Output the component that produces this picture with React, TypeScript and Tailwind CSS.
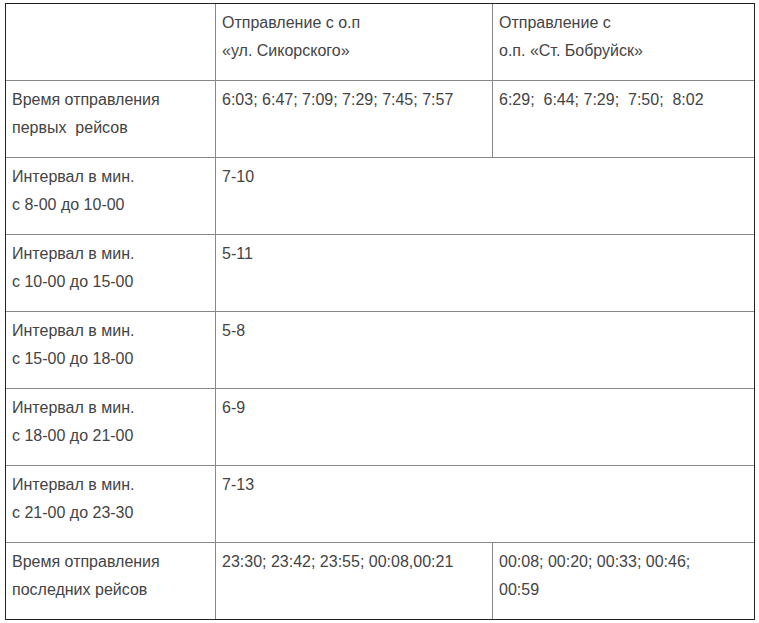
export default function App() {
  const intervals = [
    { label: "с 8-00 до 10-00", value: "7-10" },
    { label: "с 10-00 до 15-00", value: "5-11" },
    { label: "с 15-00 до 18-00", value: "5-8" },
    { label: "с 18-00 до 21-00", value: "6-9" },
    { label: "с 21-00 до 23-30", value: "7-13" },
  ];

  const cell = "flex flex-col gap-[6px] leading-[22px] pt-[8px] pl-[6px]";

  return (
    <div className="min-h-screen bg-white font-['Liberation_Sans',Arial,sans-serif] text-[16px] text-[#444]">
      <div className="ml-[5px] pt-[3px]">
        <div className="w-[750px] border border-[#222]">
          {/* header */}
          <div className="flex h-[76px]">
            <div className="w-[210px] border-r border-[#888]" />
            <div className={`${cell} w-[277px] border-r border-[#888]`}>
              <span>Отправление с о.п</span>
              <span>«ул. Сикорского»</span>
            </div>
            <div className={`${cell} flex-1`}>
              <span>Отправление с</span>
              <span>о.п. «Ст. Бобруйск»</span>
            </div>
          </div>

          {/* first trips */}
          <div className="flex h-[77px] border-t border-[#888]">
            <div className={`${cell} w-[210px] border-r border-[#888]`}>
              <span>Время отправления</span>
              <span className="whitespace-pre">первых  рейсов</span>
            </div>
            <div className={`${cell} w-[277px] border-r border-[#888]`}>
              <span>6:03; 6:47; 7:09; 7:29; 7:45; 7:57</span>
            </div>
            <div className={`${cell} flex-1`}>
              <span className="whitespace-pre">6:29;  6:44; 7:29;  7:50;  8:02</span>
            </div>
          </div>

          {intervals.map((row) => (
            <div key={row.label} className="flex h-[77px] border-t border-[#888]">
              <div className={`${cell} w-[210px] border-r border-[#888]`}>
                <span>Интервал в мин.</span>
                <span>{row.label}</span>
              </div>
              <div className={`${cell} flex-1`}>
                <span>{row.value}</span>
              </div>
            </div>
          ))}

          {/* last trips */}
          <div className="flex h-[77px] border-t border-[#888]">
            <div className={`${cell} w-[210px] border-r border-[#888]`}>
              <span>Время отправления</span>
              <span>последних рейсов</span>
            </div>
            <div className={`${cell} w-[277px] border-r border-[#888]`}>
              <span>23:30; 23:42; 23:55; 00:08,00:21</span>
            </div>
            <div className={`${cell} flex-1`}>
              <span>00:08; 00:20; 00:33; 00:46;</span>
              <span>00:59</span>
            </div>
          </div>
        </div>
      </div>
    </div>
  );
}
